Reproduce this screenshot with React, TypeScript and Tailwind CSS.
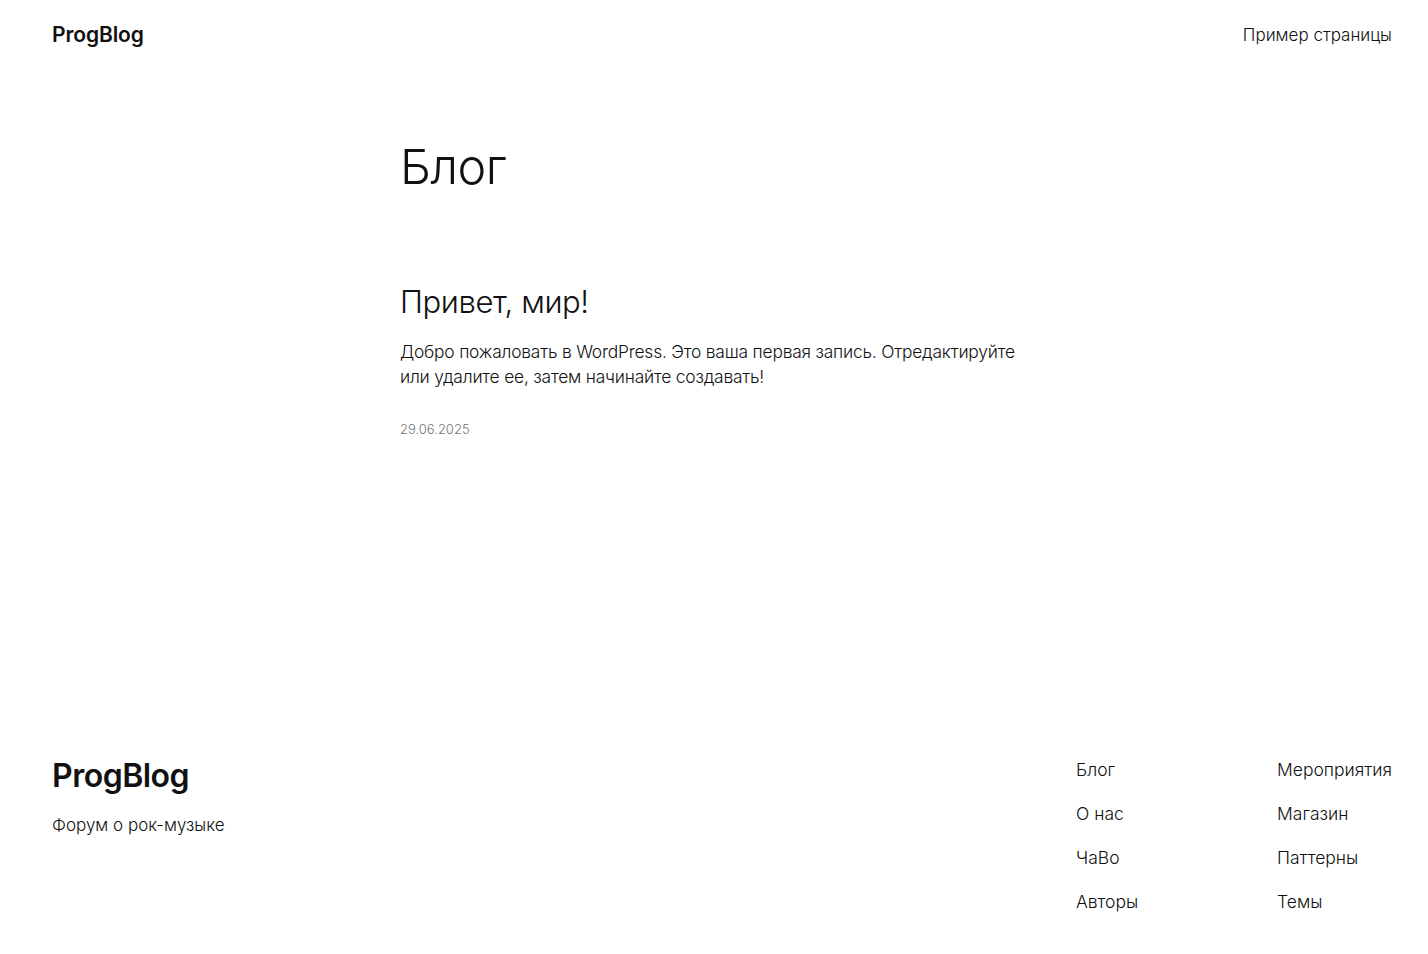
import React from "react";

const font = { fontFamily: "Inter, 'Noto Sans', sans-serif" };

export default function App() {
  return (
    <div className="min-h-[954px] bg-white text-[#111111] flex flex-col font-['Inter',sans-serif]" style={font}>
      <header className="flex items-center justify-between pl-[52px] pr-[36px] h-[70px]">
        <div className="text-[21px] font-semibold tracking-[-0.1px]">ProgBlog</div>
        <nav className="text-[17px] font-light pt-[1px]">Пример страницы</nav>
      </header>

      <main className="w-[628px] mx-auto flex flex-col">
        <h1 className="mt-[68px] text-[48.5px] font-light leading-[1.2] tracking-[-0.5px]">Блог</h1>
        <h2 className="mt-[87px] text-[31px] font-light leading-[1.2] tracking-[-0.4px]">Привет, мир!</h2>
        <p className="mt-[19px] text-[17.4px] font-light leading-[25px] tracking-[-0.2px]">
          Добро пожаловать в WordPress. Это ваша первая запись. Отредактируйте или удалите ее, затем начинайте создавать!
        </p>
        <div className="mt-[31px] text-[13px] font-light text-[#777777]">29.06.2025</div>
      </main>

      <footer className="mt-auto flex justify-between items-start pl-[52px] pr-[36px] pb-[40px]">
        <div className="flex flex-col">
          <div className="text-[32px] font-semibold tracking-[-0.5px] leading-[1.1]">ProgBlog</div>
          <div className="mt-[20px] text-[17px] font-light">Форум о рок-музыке</div>
        </div>
        <div className="flex">
          <ul className="w-[201px] flex flex-col gap-[20px] text-[17.5px] font-light leading-[24px]">
            <li>Блог</li>
            <li>О нас</li>
            <li>ЧаВо</li>
            <li>Авторы</li>
          </ul>
          <ul className="flex flex-col gap-[20px] text-[17.5px] font-light leading-[24px]">
            <li>Мероприятия</li>
            <li>Магазин</li>
            <li>Паттерны</li>
            <li>Темы</li>
          </ul>
        </div>
      </footer>
    </div>
  );
}
